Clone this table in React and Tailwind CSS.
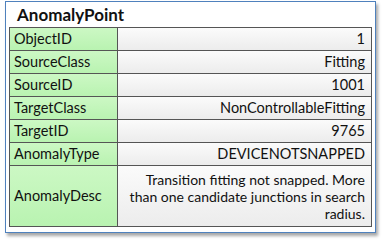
import React from "react";

const rows = [
  { label: "ObjectID", value: "1" },
  { label: "SourceClass", value: "Fitting" },
  { label: "SourceID", value: "1001" },
  { label: "TargetClass", value: "NonControllableFitting" },
  { label: "TargetID", value: "9765" },
  { label: "AnomalyType", value: "DEVICENOTSNAPPED" },
];

export default function App() {
  return (
    <div className="w-[383px] h-[240px] bg-white pl-[5px] pt-[1px] font-['Lato','Open_Sans',sans-serif] text-[#111]">
      <div className="w-[371px] h-[232px] border border-[#4f81bd] bg-white shadow-[2px_3px_3px_rgba(0,0,0,0.35)] px-[3px] flex flex-col">
        {/* Titel */}
        <div className="h-[25px] flex items-center pl-[8px] text-[17px] font-bold leading-none">
          AnomalyPoint
        </div>

        {/* Tabel */}
        <div className="border border-[#555] flex flex-col text-[14.5px]">
          {rows.map((r) => (
            <div key={r.label} className="flex h-[23px] border-b border-[#555]">
              <div className="w-[108px] border-r border-[#555] bg-gradient-to-b from-[#ccf8c4] to-[#b9f3b1] flex items-center pl-[4px]">
                {r.label}
              </div>
              <div className="flex-1 bg-gradient-to-b from-[#fbfbfb] to-[#ececec] flex items-center justify-end pr-[6px]">
                {r.value}
              </div>
            </div>
          ))}
          <div className="flex h-[60px]">
            <div className="w-[108px] border-r border-[#555] bg-gradient-to-b from-[#ccf8c4] to-[#b9f3b1] flex items-center pl-[4px]">
              AnomalyDesc
            </div>
            <div className="flex-1 bg-gradient-to-b from-[#fbfbfb] to-[#ececec] text-right text-[14px] pr-[6px] pl-[3px] pt-[5px] leading-[17px]">
              Transition fitting not snapped. More than one candidate junctions in search radius.
            </div>
          </div>
        </div>
      </div>
    </div>
  );
}
